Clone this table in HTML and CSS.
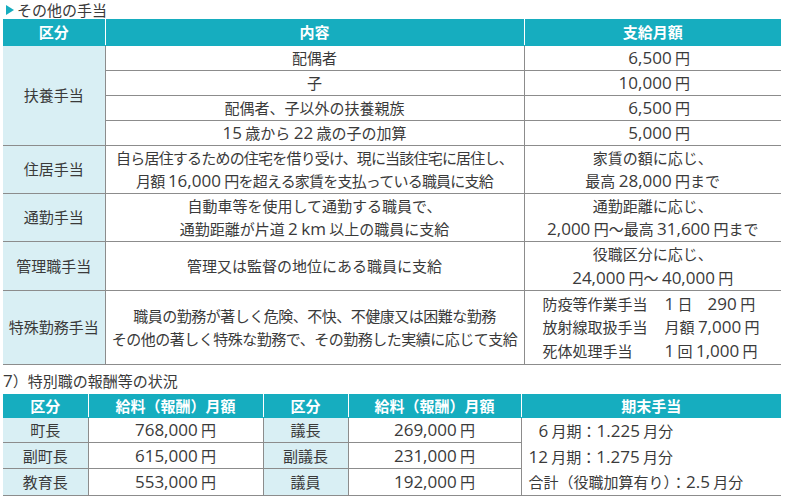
FILE: index.html
```html
<!DOCTYPE html>
<html lang="ja">
<head>
<meta charset="utf-8">
<title>その他の手当</title>
<link rel="stylesheet" href="styles.css">
</head>
<body>
<div class="page">
  <h2 class="title"><span class="tri"></span>その他の手当</h2>
  <table class="t1">
    <colgroup><col class="c1"><col class="c2"><col class="c3"></colgroup>
    <thead>
      <tr><th>区分</th><th>内容</th><th>支給月額</th></tr>
    </thead>
    <tbody>
      <tr class="r1"><td class="k" rowspan="4">扶養手当</td><td>配偶者</td><td class="amt"><span class="n">6,500</span> 円</td></tr>
      <tr class="r1"><td>子</td><td class="amt"><span class="n">10,000</span> 円</td></tr>
      <tr class="r1"><td>配偶者、子以外の扶養親族</td><td class="amt"><span class="n">6,500</span> 円</td></tr>
      <tr class="r1"><td><span class="n">15</span> 歳から <span class="n">22</span> 歳の子の加算</td><td class="amt"><span class="n">5,000</span> 円</td></tr>
      <tr class="r2"><td class="k">住居手当</td><td><span class="tight">自ら居住するための住宅を借り受け、現に当該住宅に居住し、</span><br><span class="tight">月額</span> <span class="n">16,000</span> <span class="tight">円を超える家賃を支払っている職員に支給</span></td><td>家賃の額に応じ、<br>最高 <span class="n">28,000</span> 円まで</td></tr>
      <tr class="r2"><td class="k">通勤手当</td><td>自動車等を使用して通勤する職員で、<br>通勤距離が片道 <span class="n">2</span> <span class="n">km</span> 以上の職員に支給</td><td>通勤距離に応じ、<br><span class="n">2,000</span> 円～最高 <span class="n">31,600</span> 円まで</td></tr>
      <tr class="r3"><td class="k">管理職手当</td><td>管理又は監督の地位にある職員に支給</td><td>役職区分に応じ、<br><span class="n">24,000</span> 円～ <span class="n">40,000</span> 円</td></tr>
      <tr class="r4"><td class="k">特殊勤務手当</td><td class="tight2">職員の勤務が著しく危険、不快、不健康又は困難な勤務<br>その他の著しく特殊な勤務で、その勤務した実績に応じて支給</td><td class="list">
        <div class="alw">
          <span>防疫等作業手当</span><span><span class="n">1</span> 日　<span class="n">290</span> 円</span>
          <span>放射線取扱手当</span><span>月額 <span class="n">7,000</span> 円</span>
          <span>死体処理手当</span><span><span class="n">1</span> 回 <span class="n">1,000</span> 円</span>
        </div>
      </td></tr>
    </tbody>
  </table>

  <h3 class="sub"><span class="n">7</span>）特別職の報酬等の状況</h3>
  <table class="t2">
    <colgroup><col class="d1"><col class="d2"><col class="d3"><col class="d4"><col class="d5"></colgroup>
    <thead>
      <tr><th>区分</th><th>給料（報酬）月額</th><th>区分</th><th>給料（報酬）月額</th><th>期末手当</th></tr>
    </thead>
    <tbody>
      <tr><td class="k">町長</td><td><span class="n">768,000</span> 円</td><td class="k">議長</td><td><span class="n">269,000</span> 円</td>
        <td class="bonus" rowspan="3">
          <div class="bl"><span class="ind"></span><span class="n">6</span> 月期：<span class="n">1.225</span> 月分</div>
          <div class="bl"><span class="n">12</span> 月期：<span class="n">1.275</span> 月分</div>
          <div class="bl">合計（役職加算有り）：<span class="n">2.5</span> 月分</div>
        </td></tr>
      <tr><td class="k">副町長</td><td><span class="n">615,000</span> 円</td><td class="k">副議長</td><td><span class="n">231,000</span> 円</td></tr>
      <tr><td class="k">教育長</td><td><span class="n">553,000</span> 円</td><td class="k">議員</td><td><span class="n">192,000</span> 円</td></tr>
    </tbody>
  </table>
</div>
</body>
</html>
```

FILE: styles.css
```css
* { box-sizing: border-box; }

body {
  margin: 0;
  background: #ffffff;
  color: #3a3a3a;
  font-family: "Noto Sans CJK JP", sans-serif;
  font-size: 15px;
}

.page {
  padding: 0 4px 0 3px;
}

.title {
  margin: 0;
  height: 19px;
  display: flex;
  align-items: center;
  gap: 3px;
  font-size: 15px;
  font-weight: normal;
  line-height: 18px;
}

.tri {
  width: 0;
  height: 0;
  margin-left: 3px;
  border-left: 8px solid #16adbf;
  border-top: 5px solid transparent;
  border-bottom: 5px solid transparent;
}

.n {
  font-family: "Open Sans", sans-serif;
  font-size: 17px;
  line-height: 1;
}

table {
  width: 778px;
  border-collapse: collapse;
  table-layout: fixed;
  border-top: 1px hidden;
  border-left: 1px hidden;
  border-right: 1px hidden;
}

th {
  height: 26px;
  padding: 0;
  background: #16adbf;
  color: #ffffff;
  font-weight: bold;
  font-size: 15px;
  border: 1px solid #ffffff;
  border-bottom: 1px solid #16adbf;
}

td {
  padding: 0;
  text-align: center;
  vertical-align: middle;
  line-height: 23.5px;
  border: 1px solid #8c8c8c;
  white-space: nowrap;
}

td.k {
  background: #d9eff4;
}

.t1 .c1 { width: 102px; }
.t1 .c2 { width: 419px; }
.t1 .c3 { width: 257px; }

.r1 { height: 25px; }
.r2 { height: 47px; }
.r3 { height: 49px; }
.r4 { height: 74px; }

td.amt {
  text-align: right;
  padding-right: 91px;
}

.tight { letter-spacing: -0.8px; }
.tight2 { letter-spacing: -0.5px; }

td.list {
  text-align: left;
  padding-left: 18px;
}

.alw {
  display: grid;
  grid-template-columns: 122px auto;
}

.sub {
  margin: 0;
  height: 29px;
  padding-top: 4px;
  font-size: 15px;
  font-weight: normal;
  line-height: 24px;
}

.t2 th { height: 24px; }
.t2 tbody tr { height: 26px; }
.t2 tbody tr:first-child { height: 25px; }

.t2 .d1 { width: 85px; }
.t2 .d2 { width: 175px; }
.t2 .d3 { width: 85px; }
.t2 .d4 { width: 173px; }
.t2 .d5 { width: 260px; }

td.bonus {
  text-align: left;
  padding-left: 7px;
  vertical-align: top;
}

.bl {
  height: 25.5px;
  line-height: 25.5px;
}

.ind {
  display: inline-block;
  width: 10px;
}
```
